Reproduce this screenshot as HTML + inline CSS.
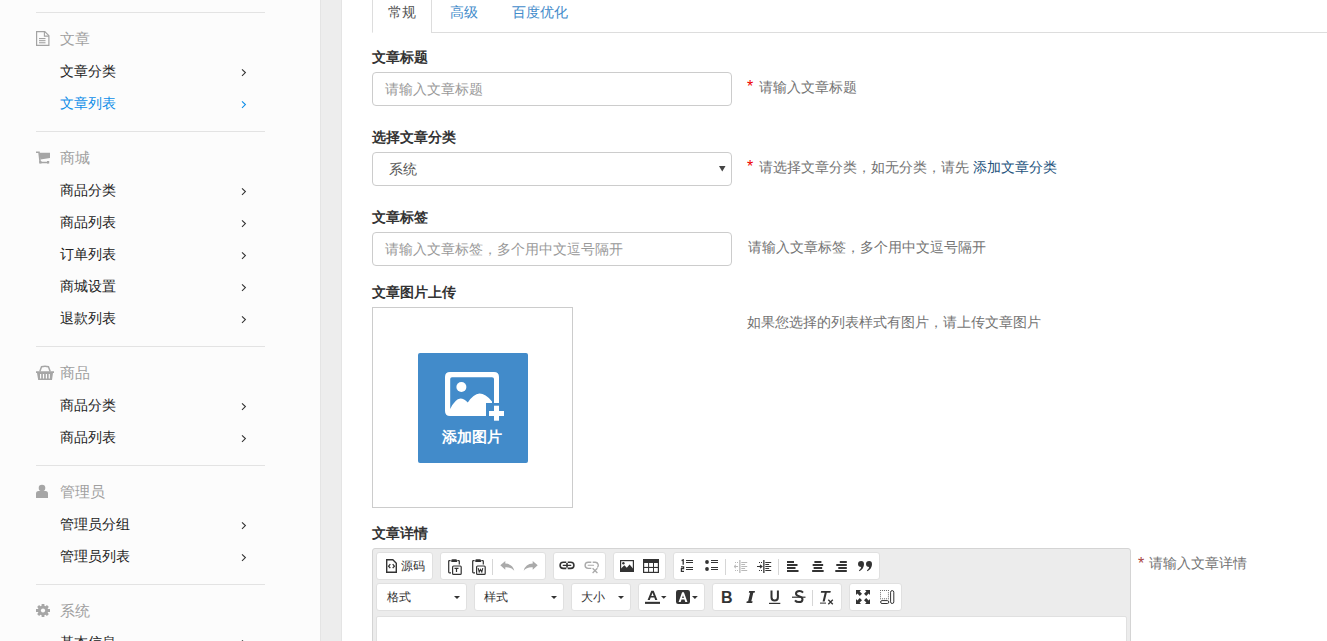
<!DOCTYPE html>
<html><head><meta charset="utf-8">
<style>
*{box-sizing:border-box;margin:0;padding:0}
html,body{width:1327px;height:641px;overflow:hidden;background:#fff;font-family:"Liberation Sans",sans-serif;font-size:14px;color:#333}
.a{position:absolute;white-space:nowrap}
#side{position:absolute;left:0;top:0;width:320px;height:641px;background:#fcfcfc}
#gap{position:absolute;left:320px;top:0;width:22px;height:641px;background:#ededed;border-left:1px solid #e4e4e4;border-right:1px solid #e4e4e4}
.dv{position:absolute;left:36px;width:229px;height:1px;background:#e3e3e3}
.hd{position:absolute;left:60px;font-size:15px;line-height:20px;color:#a0a0a0;margin-top:1px}
.it{position:absolute;left:60px;font-size:14px;line-height:20px;color:#222}
.ar{position:absolute;left:241px;width:6px;height:9px}
.ic{position:absolute;left:36px}
.lbl{position:absolute;left:372px;font-size:14px;line-height:20px;font-weight:bold;color:#333}
.inp{position:absolute;left:372px;width:360px;height:34px;border:1px solid #ccc;border-radius:4px;background:#fff}
.help{position:absolute;font-size:14px;line-height:20px;color:#737373}
.star{color:#e00}
</style></head><body>
<div id="side">
  <div class="dv" style="top:12px"></div>
  <svg class="ic" style="top:31px" width="14" height="15" viewBox="0 0 14 15"><path d="M0.6 0.6H8.8L12.9 4.7V14.4H0.6Z" fill="none" stroke="#a3a3a3" stroke-width="1.2"/><path d="M8.4 0.6V5.1H12.9" fill="none" stroke="#a3a3a3" stroke-width="1.1"/><rect x="3" y="7" width="6.5" height="1.1" fill="#a3a3a3"/><rect x="3" y="9.1" width="6.5" height="1.1" fill="#a3a3a3"/><rect x="3" y="11.2" width="6.5" height="1.1" fill="#a3a3a3"/></svg>
  <div class="hd" style="top:28px">文章</div>
  <div class="it" style="top:61px">文章分类</div>
  <div class="it" style="top:93px;color:#0e8ee8">文章列表</div>

  <div class="dv" style="top:131px"></div>
  <div class="hd" style="top:147px">商城</div>
  <div class="it" style="top:180px">商品分类</div>
  <div class="it" style="top:212px">商品列表</div>
  <div class="it" style="top:244px">订单列表</div>
  <div class="it" style="top:276px">商城设置</div>
  <div class="it" style="top:308px">退款列表</div>

  <div class="dv" style="top:346px"></div>
  <div class="hd" style="top:362px">商品</div>
  <div class="it" style="top:395px">商品分类</div>
  <div class="it" style="top:427px">商品列表</div>

  <div class="dv" style="top:465px"></div>
  <div class="hd" style="top:481px">管理员</div>
  <div class="it" style="top:514px">管理员分组</div>
  <div class="it" style="top:546px">管理员列表</div>

  <div class="dv" style="top:584px"></div>
  <svg class="ar" style="top:68px" width="6" height="9" viewBox="0 0 6 9"><path d="M1 1.3L4.4 4.6L1 7.9" fill="none" stroke="#333" stroke-width="1.1"/></svg>
  <svg class="ar" style="top:100px" width="6" height="9" viewBox="0 0 6 9"><path d="M1 1.3L4.4 4.6L1 7.9" fill="none" stroke="#0e8ee8" stroke-width="1.1"/></svg>
  <svg class="ar" style="top:187px" width="6" height="9" viewBox="0 0 6 9"><path d="M1 1.3L4.4 4.6L1 7.9" fill="none" stroke="#333" stroke-width="1.1"/></svg>
  <svg class="ar" style="top:219px" width="6" height="9" viewBox="0 0 6 9"><path d="M1 1.3L4.4 4.6L1 7.9" fill="none" stroke="#333" stroke-width="1.1"/></svg>
  <svg class="ar" style="top:251px" width="6" height="9" viewBox="0 0 6 9"><path d="M1 1.3L4.4 4.6L1 7.9" fill="none" stroke="#333" stroke-width="1.1"/></svg>
  <svg class="ar" style="top:283px" width="6" height="9" viewBox="0 0 6 9"><path d="M1 1.3L4.4 4.6L1 7.9" fill="none" stroke="#333" stroke-width="1.1"/></svg>
  <svg class="ar" style="top:315px" width="6" height="9" viewBox="0 0 6 9"><path d="M1 1.3L4.4 4.6L1 7.9" fill="none" stroke="#333" stroke-width="1.1"/></svg>
  <svg class="ar" style="top:402px" width="6" height="9" viewBox="0 0 6 9"><path d="M1 1.3L4.4 4.6L1 7.9" fill="none" stroke="#333" stroke-width="1.1"/></svg>
  <svg class="ar" style="top:434px" width="6" height="9" viewBox="0 0 6 9"><path d="M1 1.3L4.4 4.6L1 7.9" fill="none" stroke="#333" stroke-width="1.1"/></svg>
  <svg class="ar" style="top:521px" width="6" height="9" viewBox="0 0 6 9"><path d="M1 1.3L4.4 4.6L1 7.9" fill="none" stroke="#333" stroke-width="1.1"/></svg>
  <svg class="ar" style="top:553px" width="6" height="9" viewBox="0 0 6 9"><path d="M1 1.3L4.4 4.6L1 7.9" fill="none" stroke="#333" stroke-width="1.1"/></svg>
  <svg class="ar" style="top:639px" width="6" height="9" viewBox="0 0 6 9"><path d="M1 1.3L4.4 4.6L1 7.9" fill="none" stroke="#333" stroke-width="1.1"/></svg>
  <svg class="ic" style="top:151px" width="15" height="13" viewBox="0 0 15 13"><path d="M0 1.2H3L4.2 11.5H12.5" fill="none" stroke="#a6a6a6" stroke-width="1.6"/><path d="M3.3 1.8H14V7L4.4 8.5Z" fill="#a6a6a6"/><rect x="3.3" y="10" width="2.2" height="2.5" fill="#a6a6a6"/><rect x="11" y="10" width="2.2" height="2.5" fill="#a6a6a6"/></svg>
  <svg class="ic" style="top:365px" width="18" height="15" viewBox="0 0 18 15"><path d="M3.8 6.5L5.5 1.8Q9 0.6 12.5 1.8L14.2 6.5" fill="none" stroke="#a6a6a6" stroke-width="1.5"/><path d="M0 6.2H18V8H17L16 15H2.2L1 8H0Z" fill="#a6a6a6"/><rect x="4" y="9" width="1.2" height="4.5" fill="#fcfcfc"/><rect x="6.9" y="9" width="1.2" height="4.5" fill="#fcfcfc"/><rect x="9.8" y="9" width="1.2" height="4.5" fill="#fcfcfc"/><rect x="12.7" y="9" width="1.2" height="4.5" fill="#fcfcfc"/></svg>
  <svg class="ic" style="top:484px" width="12" height="14" viewBox="0 0 12 14"><circle cx="6" cy="4" r="3.3" fill="#a6a6a6"/><path d="M0 14V9.5Q0 7 2.5 7H9.5Q12 7 12 9.5V14Z" fill="#a6a6a6"/></svg>
  <svg class="ic" style="top:604px" width="14" height="13" viewBox="0 0 14 13"><path d="M5.6 0H8.4V1.8L9.6 2.3L10.9 1L12.9 3L11.6 4.3L12.1 5.1H14V7.9H12.1L11.6 8.7L12.9 10L10.9 12L9.6 10.7L8.4 11.2V13H5.6V11.2L4.4 10.7L3.1 12L1.1 10L2.4 8.7L1.9 7.9H0V5.1H1.9L2.4 4.3L1.1 3L3.1 1L4.4 2.3L5.6 1.8Z" fill="#a6a6a6"/><circle cx="7" cy="6.5" r="2.1" fill="#fcfcfc"/></svg>
  <div class="hd" style="top:600px">系统</div>
  <div class="it" style="top:632px">基本信息</div>
</div>
<div id="gap"></div>

<!-- tabs -->
<div class="a" style="left:372px;top:-9px;width:60px;height:42px;border:1px solid #ddd;border-bottom-color:#fff;border-radius:4px 4px 0 0;background:#fff"></div>
<div class="a" style="left:431px;top:32px;width:896px;height:1px;background:#ddd"></div>
<div class="a" style="left:388px;top:2px;line-height:20px;color:#555">常规</div>
<div class="a" style="left:450px;top:2px;line-height:20px;color:#428bca">高级</div>
<div class="a" style="left:512px;top:2px;line-height:20px;color:#428bca">百度优化</div>

<div class="lbl" style="top:47px">文章标题</div>
<div class="inp" style="top:72px"></div>
<div class="a" style="left:385px;top:79px;line-height:20px;color:#999">请输入文章标题</div>
<div class="a star" style="left:747px;top:77px;font-size:16px;line-height:20px">*</div><div class="help" style="left:759px;top:77px">请输入文章标题</div>

<div class="lbl" style="top:127px">选择文章分类</div>
<div class="inp" style="top:152px"></div>
<div class="a" style="left:389px;top:159px;line-height:20px;color:#555">系统</div>
<svg class="a" style="left:719px;top:166px" width="7" height="6"><path d="M0 0H6.5L3.25 5.5Z" fill="#444"/></svg>
<div class="a star" style="left:747px;top:157px;font-size:16px;line-height:20px">*</div><div class="help" style="left:759px;top:157px">请选择文章分类，如无分类，请先 <span style="color:#23527c">添加文章分类</span></div>

<div class="lbl" style="top:207px">文章标签</div>
<div class="inp" style="top:232px"></div>
<div class="a" style="left:385px;top:239px;line-height:20px;color:#999">请输入文章标签，多个用中文逗号隔开</div>
<div class="help" style="left:748px;top:237px">请输入文章标签，多个用中文逗号隔开</div>

<div class="lbl" style="top:282px">文章图片上传</div>
<div class="a" style="left:372px;top:307px;width:201px;height:201px;border:1px solid #ccc;background:#fff"></div>
<div class="a" style="left:418px;top:353px;width:110px;height:110px;background:#428bca;border-radius:2px"></div>
<svg class="a" style="left:438px;top:365px" width="72" height="60" viewBox="0 0 72 60">
<path fill-rule="evenodd" fill="#fff" d="M12 7H56Q61 7 61 12V38H48V51H12Q7 51 7 46V12Q7 7 12 7ZM14 12.2Q12.2 12.2 12.2 14V44Q17 34 22.5 33.5Q26 33.5 29.8 37.6Q35.5 29 41.5 28.6Q47.5 28.6 54 36.5V38H56V14Q56 12.2 54 12.2Z"/>
<circle cx="23.4" cy="22" r="5" fill="#fff"/>
<rect x="51" y="46" width="15" height="5" fill="#fff"/><rect x="56" y="40.7" width="5" height="15" fill="#fff"/>
</svg>
<div class="a" style="left:442px;top:427px;font-size:15px;line-height:20px;color:#fff;font-weight:bold">添加图片</div>
<div class="help" style="left:747px;top:312px">如果您选择的列表样式有图片，请上传文章图片</div>

<div class="lbl" style="top:523px">文章详情</div>
<div class="a" style="left:1138px;top:554px;font-size:16px;line-height:20px;color:#a94442">*</div><div class="help" style="left:1149px;top:553px">请输入文章详情</div>

<!-- editor -->
<div class="a" style="left:372px;top:548px;width:759px;height:120px;background:#ececec;border:1px solid #d4d4d4;border-radius:3px"></div>
<div class="a" style="left:376px;top:552px;width:57px;height:28px;background:#fff;border:1px solid #e0e0e0;border-radius:3px"></div>
<div class="a" style="left:440px;top:552px;width:106px;height:28px;background:#fff;border:1px solid #e0e0e0;border-radius:3px"></div>
<div class="a" style="left:553px;top:552px;width:53px;height:28px;background:#fff;border:1px solid #e0e0e0;border-radius:3px"></div>
<div class="a" style="left:613px;top:552px;width:53px;height:28px;background:#fff;border:1px solid #e0e0e0;border-radius:3px"></div>
<div class="a" style="left:673px;top:552px;width:207px;height:28px;background:#fff;border:1px solid #e0e0e0;border-radius:3px"></div>
<div class="a" style="left:376px;top:583px;width:91px;height:28px;background:#fff;border:1px solid #e0e0e0;border-radius:3px"></div>
<div class="a" style="left:474px;top:583px;width:90px;height:28px;background:#fff;border:1px solid #e0e0e0;border-radius:3px"></div>
<div class="a" style="left:571px;top:583px;width:60px;height:28px;background:#fff;border:1px solid #e0e0e0;border-radius:3px"></div>
<div class="a" style="left:638px;top:583px;width:67px;height:28px;background:#fff;border:1px solid #e0e0e0;border-radius:3px"></div>
<div class="a" style="left:712px;top:583px;width:130px;height:28px;background:#fff;border:1px solid #e0e0e0;border-radius:3px"></div>
<div class="a" style="left:849px;top:583px;width:53px;height:28px;background:#fff;border:1px solid #e0e0e0;border-radius:3px"></div>
<div class="a" style="left:376px;top:616px;width:751px;height:60px;background:#fff;border:1px solid #e0e0e0;border-radius:2px"></div>
<div class="a" style="left:492px;top:559px;width:1px;height:16px;background:#d6d6d6"></div>
<div class="a" style="left:725px;top:559px;width:1px;height:16px;background:#d6d6d6"></div>
<div class="a" style="left:778px;top:559px;width:1px;height:16px;background:#d6d6d6"></div>
<div class="a" style="left:812px;top:590px;width:1px;height:16px;background:#d6d6d6"></div>
<svg class="a" style="left:386px;top:559px" width="11" height="14" viewBox="0 0 11 14"><path d="M0.7 0.7H6.8L10.3 4.2V13.3H0.7Z" fill="none" stroke="#333" stroke-width="1.4"/><path d="M4.3 5.2L2.6 7.2L4.3 9.2M6.7 5.2L8.4 7.2L6.7 9.2" fill="none" stroke="#333" stroke-width="1.3"/></svg>
<div class="a" style="left:401px;top:556px;font-size:12px;line-height:20px;color:#333">源码</div>
<svg class="a" style="left:448px;top:559px" width="14" height="16" viewBox="0 0 14 16"><path d="M2.6 1.6H1.4Q0.7 1.6 0.7 2.3V13.1Q0.7 13.8 1.4 13.8H3" fill="none" stroke="#333" stroke-width="1.2"/><path d="M9.3 1.6H10.6Q11.3 1.6 11.3 2.3V5.5" fill="none" stroke="#333" stroke-width="1.2"/><path d="M3.3 3V1.5Q3.3 0.3 4.5 0.3H7.8Q9 0.3 9 1.5V3Z" fill="#333"/><rect x="4.6" y="7" width="8.6" height="8.4" rx="1" fill="none" stroke="#333" stroke-width="1.2"/><path d="M6.5 9.3H10.5M8.5 9.3V13" fill="none" stroke="#333" stroke-width="1.2"/></svg>
<svg class="a" style="left:472px;top:559px" width="14" height="16" viewBox="0 0 14 16"><path d="M2.6 1.6H1.4Q0.7 1.6 0.7 2.3V13.1Q0.7 13.8 1.4 13.8H3" fill="none" stroke="#333" stroke-width="1.2"/><path d="M9.3 1.6H10.6Q11.3 1.6 11.3 2.3V5.5" fill="none" stroke="#333" stroke-width="1.2"/><path d="M3.3 3V1.5Q3.3 0.3 4.5 0.3H7.8Q9 0.3 9 1.5V3Z" fill="#333"/><rect x="4.6" y="7" width="8.6" height="8.4" rx="1" fill="none" stroke="#333" stroke-width="1.2"/><path d="M6.2 9.2L7.2 13L8.5 10.5L9.8 13L10.8 9.2" fill="none" stroke="#333" stroke-width="1.1"/></svg>
<svg class="a" style="left:500px;top:561px" width="15" height="10" viewBox="0 0 15 10"><path d="M0.3 4.3L5.3 0V2.6Q12.5 2.8 14.3 9.8Q11.5 5.8 5.3 6.2V8.8Z" fill="#aaa"/></svg>
<svg class="a" style="left:523px;top:561px" width="15" height="10" viewBox="0 0 15 10"><g transform="translate(15 0) scale(-1 1)"><path d="M0.3 4.3L5.3 0V2.6Q12.5 2.8 14.3 9.8Q11.5 5.8 5.3 6.2V8.8Z" fill="#aaa"/></g></svg>
<svg class="a" style="left:559px;top:561px" width="16" height="9" viewBox="0 0 16 9"><path d="M7.3 1.2H4.2A3.1 3.1 0 0 0 4.2 7.4H7.3M8.7 1.2H11.8A3.1 3.1 0 0 1 11.8 7.4H8.7" fill="none" stroke="#333" stroke-width="1.6"/><rect x="3.6" y="3.7" width="8.8" height="1.2" rx="0.6" fill="#333"/><rect x="7.2" y="2" width="1.6" height="4.6" fill="#333"/></svg>
<svg class="a" style="left:584px;top:561px" width="16" height="13" viewBox="0 0 16 13"><path d="M7.3 1.2H4.2A3.1 3.1 0 0 0 4.2 7.4H7.3M8.7 1.2H11.2A3.1 3.1 0 0 1 13.3 6.6" fill="none" stroke="#aaa" stroke-width="1.4"/><rect x="3.6" y="3.7" width="6.5" height="1.1" rx="0.5" fill="#aaa"/><path d="M8.6 7.2L13.4 12M13.4 7.2L8.6 12" stroke="#aaa" stroke-width="1.3"/></svg>
<svg class="a" style="left:620px;top:560px" width="14" height="12" viewBox="0 0 14 12"><rect x="0.6" y="0.6" width="12.8" height="10.8" fill="none" stroke="#333" stroke-width="1.2"/><path d="M1 11V8.6L4.3 5.2L6.8 7.8L9.6 4.6L13 8.5V11Z" fill="#333"/><circle cx="3.4" cy="3.3" r="1.2" fill="#333"/></svg>
<svg class="a" style="left:643px;top:559px" width="16" height="14" viewBox="0 0 16 14"><rect x="0" y="0" width="16" height="14" fill="#333"/><g fill="#fff"><rect x="1.2" y="4" width="3.9" height="3.9"/><rect x="6.1" y="4" width="3.9" height="3.9"/><rect x="11" y="4" width="3.8" height="3.9"/><rect x="1.2" y="9" width="3.9" height="3.8"/><rect x="6.1" y="9" width="3.9" height="3.8"/><rect x="11" y="9" width="3.8" height="3.8"/></g></svg>
<svg class="a" style="left:680px;top:559px" width="13" height="13" viewBox="0 0 13 13"><path d="M1.6 1.6L3.2 0.8V5.8" fill="none" stroke="#333" stroke-width="1.3"/><path d="M1 7.9H3.6V9.7H1.4V12.4H4" fill="none" stroke="#333" stroke-width="1.2"/><g fill="#333"><rect x="6" y="1" width="7" height="1"/><rect x="6" y="3" width="7" height="1"/><rect x="6" y="8" width="7" height="1"/><rect x="6" y="10" width="7" height="1"/></g></svg>
<svg class="a" style="left:704px;top:559px" width="15" height="13" viewBox="0 0 15 13"><g fill="#333"><circle cx="3" cy="3" r="1.9"/><circle cx="3" cy="10" r="1.9"/><rect x="7" y="1" width="7" height="1"/><rect x="7" y="3" width="7" height="1"/><rect x="7" y="8" width="7" height="1"/><rect x="7" y="10" width="7" height="1"/></g></svg>
<svg class="a" style="left:733px;top:560px" width="15" height="14" viewBox="0 0 15 14"><g fill="#b8b8b8"><rect x="6.2" y="0" width="1.3" height="13"/><rect x="8.3" y="2" width="5.9" height="1"/><rect x="8.3" y="4" width="3.8" height="1"/><rect x="8.3" y="6" width="5.9" height="1"/><rect x="8.3" y="8" width="3.8" height="1"/><rect x="8.3" y="10" width="5.9" height="1"/><rect x="2" y="2" width="1" height="1"/><rect x="4" y="2" width="1" height="1"/><rect x="2" y="10" width="1" height="1"/><rect x="4" y="10" width="1" height="1"/></g><path d="M5 6.5H1.2M3 4.8L1 6.5L3 8.2" fill="none" stroke="#b8b8b8" stroke-width="1"/></svg>
<svg class="a" style="left:757px;top:560px" width="15" height="14" viewBox="0 0 15 14"><g fill="#333"><rect x="6.2" y="0" width="1.3" height="13"/><rect x="8.3" y="2" width="5.9" height="1"/><rect x="8.3" y="4" width="3.8" height="1"/><rect x="8.3" y="6" width="5.9" height="1"/><rect x="8.3" y="8" width="3.8" height="1"/><rect x="8.3" y="10" width="5.9" height="1"/><rect x="2" y="2" width="1" height="1"/><rect x="4" y="2" width="1" height="1"/><rect x="2" y="10" width="1" height="1"/><rect x="4" y="10" width="1" height="1"/></g><path d="M0 6.5H4.6M3 4.8L5 6.5L3 8.2" fill="none" stroke="#333" stroke-width="1.1"/></svg>
<svg class="a" style="left:787px;top:561px" width="12" height="12" viewBox="0 0 12 12"><g fill="#333"><rect x="0" y="0" width="7" height="2"/><rect x="0" y="3" width="10.5" height="2"/><rect x="0" y="6" width="8.5" height="2"/><rect x="0" y="9" width="11.5" height="2"/></g></svg>
<svg class="a" style="left:811.5px;top:561px" width="12" height="12" viewBox="0 0 12 12"><g fill="#333"><rect x="2.4000000000000004" y="0" width="7" height="2"/><rect x="0.6500000000000004" y="3" width="10.5" height="2"/><rect x="1.6500000000000004" y="6" width="8.5" height="2"/><rect x="0.15000000000000036" y="9" width="11.5" height="2"/></g></svg>
<svg class="a" style="left:835px;top:561px" width="12" height="12" viewBox="0 0 12 12"><g fill="#333"><rect x="4.800000000000001" y="0" width="7" height="2"/><rect x="1.3000000000000007" y="3" width="10.5" height="2"/><rect x="3.3000000000000007" y="6" width="8.5" height="2"/><rect x="0.3000000000000007" y="9" width="11.5" height="2"/></g></svg>
<svg class="a" style="left:858px;top:561px" width="15" height="11" viewBox="0 0 15 11"><g fill="#333"><path d="M3.2 0Q6 0 6 3.2Q6 7.5 1.5 10.2L0.9 9.5Q3 7.6 3.2 6Q0 6 0 3Q0 0 3.2 0Z"/><g transform="translate(8 0)"><path d="M3.2 0Q6 0 6 3.2Q6 7.5 1.5 10.2L0.9 9.5Q3 7.6 3.2 6Q0 6 0 3Q0 0 3.2 0Z"/></g></g></svg>
<div class="a" style="left:387px;top:587px;font-size:12px;line-height:20px;color:#333">格式</div>
<svg class="a" style="left:454px;top:596px" width="6" height="4" viewBox="0 0 6 4"><path d="M0 0H6L3 3Z" fill="#333"/></svg>
<div class="a" style="left:484px;top:587px;font-size:12px;line-height:20px;color:#333">样式</div>
<svg class="a" style="left:551px;top:596px" width="6" height="4" viewBox="0 0 6 4"><path d="M0 0H6L3 3Z" fill="#333"/></svg>
<div class="a" style="left:581px;top:587px;font-size:12px;line-height:20px;color:#333">大小</div>
<svg class="a" style="left:618px;top:596px" width="6" height="4" viewBox="0 0 6 4"><path d="M0 0H6L3 3Z" fill="#333"/></svg>
<svg class="a" style="left:645px;top:590px" width="15" height="14" viewBox="0 0 15 14"><path d="M2.6 10L6.3 0.8H8.7L12.4 10H10.2L9.3 7.6H5.7L4.8 10ZM6.3 5.9H8.7L7.5 2.8Z" fill="#333"/><rect x="0" y="11.8" width="15" height="2.1" fill="#333"/></svg>
<svg class="a" style="left:661px;top:596px" width="6" height="4" viewBox="0 0 6 4"><path d="M0 0H5.5L2.75 2.8Z" fill="#333"/></svg>
<svg class="a" style="left:676px;top:590px" width="14" height="14" viewBox="0 0 14 14"><rect x="0" y="0" width="14" height="14" rx="2.2" fill="#333"/><path d="M2.6 12L6.1 2.2H7.9L11.4 12H9.3L8.5 9.6H5.5L4.7 12ZM6.1 7.9H7.9L7 5.2Z" fill="#fff"/></svg>
<svg class="a" style="left:692px;top:596px" width="6" height="4" viewBox="0 0 6 4"><path d="M0 0H5.8L2.9 2.9Z" fill="#333"/></svg>
<div class="a" style="left:721px;top:588px;font-size:16px;line-height:20px;font-weight:bold;color:#333">B</div>
<svg class="a" style="left:746px;top:591px" width="9" height="12" viewBox="0 0 9 12"><path d="M3.2 0H9L8.6 1.7H7.3L5.3 10.2H6.6L6.2 12H0.4L0.8 10.2H2.1L4.1 1.7H2.8Z" fill="#333"/></svg>
<svg class="a" style="left:769px;top:590px" width="12" height="15" viewBox="0 0 12 15"><path d="M2.5 0.4V7.3Q2.5 10.6 5.7 10.6Q8.9 10.6 8.9 7.3V0.4" fill="none" stroke="#333" stroke-width="2"/><rect x="0" y="12.8" width="11.3" height="1.2" fill="#333"/></svg>
<svg class="a" style="left:792px;top:590px" width="14" height="14" viewBox="0 0 14 14"><path d="M11 2.6Q9.8 1 7.5 1Q4 1 4 3.6Q4 5.4 7 6.2Q10.5 7.1 10.5 9.2Q10.5 12.1 7 12.1Q4.3 12.1 3 10.3" fill="none" stroke="#333" stroke-width="2"/><rect x="0" y="6.6" width="13.5" height="1.2" fill="#333"/></svg>
<svg class="a" style="left:820px;top:591px" width="14" height="14" viewBox="0 0 14 14"><path d="M1.2 0H10.8L10.4 1.8H6.8L4.7 10.6H2.6L4.7 1.8H0.8Z" fill="#333"/><rect x="0" y="11.6" width="6" height="1" fill="#333"/><path d="M8.3 8.8L12.8 13.3M12.8 8.8L8.3 13.3" stroke="#333" stroke-width="1.3"/></svg>
<svg class="a" style="left:856px;top:590px" width="14" height="14" viewBox="0 0 14 14"><g fill="#333"><path d="M0 0H5L3.6 1.4L6 3.8L3.8 6L1.4 3.6L0 5Z"/><path d="M14 0V5L12.6 3.6L10.2 6L8 3.8L10.4 1.4L9 0Z"/><path d="M0 14V9L1.4 10.4L3.8 8L6 10.2L3.6 12.6L5 14Z"/><path d="M14 14H9L10.4 12.6L8 10.2L10.2 8L12.6 10.4L14 9Z"/></g></svg>
<svg class="a" style="left:880px;top:590px" width="15" height="14" viewBox="0 0 15 14"><g fill="#333"><circle cx="0.4" cy="0.6" r="0.5"/><circle cx="0.4" cy="2.65" r="0.5"/><circle cx="0.4" cy="4.699999999999999" r="0.5"/><circle cx="0.4" cy="6.749999999999999" r="0.5"/><circle cx="0.4" cy="8.799999999999999" r="0.5"/><circle cx="2.4" cy="0.6" r="0.5"/><circle cx="2.4" cy="8.799999999999999" r="0.5"/><circle cx="4.4" cy="0.6" r="0.5"/><circle cx="4.4" cy="8.799999999999999" r="0.5"/><circle cx="6.4" cy="0.6" r="0.5"/><circle cx="6.4" cy="8.799999999999999" r="0.5"/><circle cx="8.4" cy="0.6" r="0.5"/><circle cx="8.4" cy="2.65" r="0.5"/><circle cx="8.4" cy="4.699999999999999" r="0.5"/><circle cx="8.4" cy="6.749999999999999" r="0.5"/><circle cx="8.4" cy="8.799999999999999" r="0.5"/></g><rect x="0.6" y="10.6" width="8.2" height="2.9" rx="1.45" fill="none" stroke="#333" stroke-width="1"/><rect x="10.6" y="0.6" width="3.2" height="12.9" rx="1.6" fill="none" stroke="#333" stroke-width="1"/></svg>

</body></html>
